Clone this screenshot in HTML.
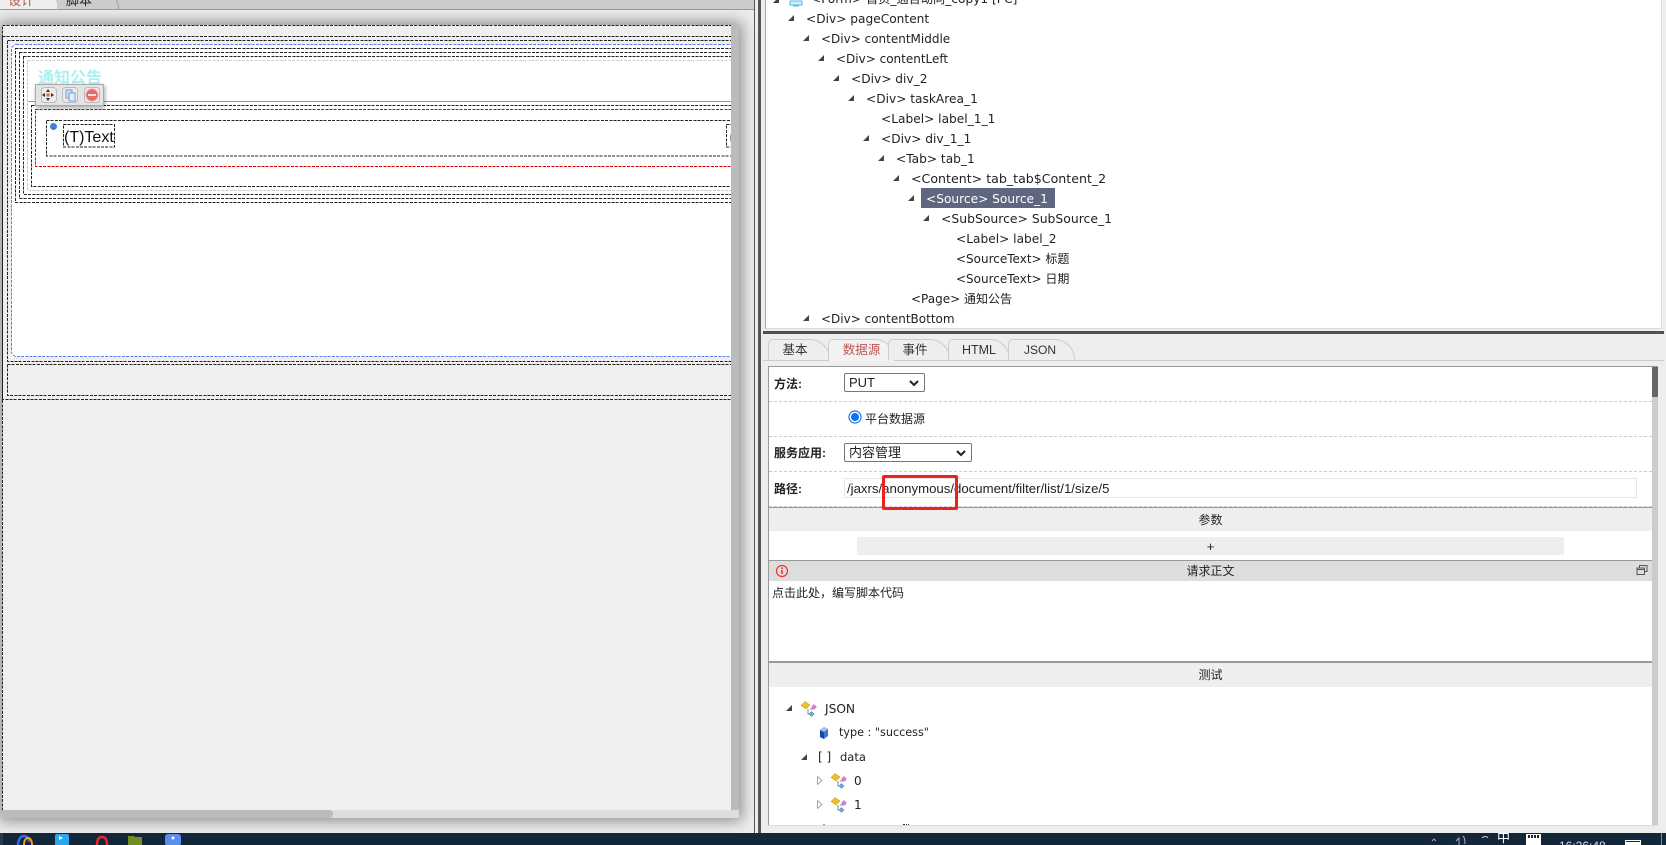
<!DOCTYPE html>
<html><head><meta charset="utf-8"><title>Designer</title>
<style>
html,body{margin:0;padding:0;background:#eee;width:1666px;height:845px;overflow:hidden}
body{position:relative;font-family:"Liberation Sans","WenQuanYi Zen Hei","Noto Sans CJK SC",sans-serif;font-size:12px;color:#222}
div,span{position:absolute;box-sizing:border-box}
.r{white-space:nowrap;height:20px;line-height:20px;font-family:"DejaVu Sans","WenQuanYi Zen Hei","Noto Sans CJK SC",sans-serif;font-size:12.2px;color:#222}
.a{width:0;height:0;border-left:6px solid transparent;border-bottom:6px solid #444}
.h{left:769px;width:883px;text-align:center;font-size:12px;line-height:20px}
.dl{left:769px;width:883px;height:0;border-top:1px dashed #ccc}
.lb{left:774px;font-weight:bold;font-size:12px;line-height:20px;color:#222;white-space:nowrap}
.sel{border:1px solid #777;border-radius:2px;background:#fff;font-size:13px;line-height:17px;padding-left:4px;height:19px;color:#222;white-space:nowrap}
.tab{top:339px;height:21px;background:#eee;border:1px solid #ccc;border-bottom:0;border-radius:5px 20px 0 0;text-align:center;line-height:21px;font-size:12.5px;color:#333}
</style></head><body>

<!-- top tabs of left panel -->
<div style="left:0;top:0;width:754px;height:10px;background:#ccc;border-bottom:1px solid #999;overflow:hidden">
 <div style="left:0;top:-6px;width:58px;height:16px;background:#eee;border-radius:0 14px 0 0;color:#b55;font-size:13px;padding-left:8px;line-height:14px">设计</div>
 <div style="left:57px;top:-6px;width:62px;height:15px;background:#ccc;border-right:1px solid #999;border-radius:0 14px 0 0;color:#222;font-size:13px;padding-left:9px;line-height:14px">脚本</div>
</div>

<!-- canvas -->
<div style="left:0;top:10px;width:754px;height:823px;background:#eee;overflow:hidden">
 <div style="left:2px;top:15px;width:737px;height:793px;background:#efefef;box-shadow:0 0 14px 3px rgba(60,60,60,.55)"></div>
</div>
<div style="left:11px;top:44px;width:720px;height:313px;background:#fff"></div>
<div style="left:28px;top:101px;width:703px;height:1px;background:#999"></div>
<svg width="729" height="786" style="position:absolute;left:2px;top:25px" shape-rendering="crispEdges" fill="none" stroke-width="1" stroke-dasharray="3 1.2">
 <g stroke="#222">
  <rect x="0.5" y="0.5" width="800" height="800"/>
  <rect x="0.5" y="11.5" width="800" height="363"/>
  <rect x="5.5" y="15.5" width="800" height="321"/>
  <rect x="5.5" y="339.5" width="800" height="31"/>
  <rect x="13.5" y="23.5" width="800" height="154"/>
  <rect x="17.5" y="27.5" width="800" height="146"/>
  <rect x="21.5" y="31.5" width="800" height="138"/>
  <rect x="29.5" y="80.5" width="800" height="81"/>
  <rect x="44.5" y="95.5" width="800" height="35.5"/>
  <rect x="61.5" y="99.5" width="51" height="22.5"/>
  <rect x="724.5" y="99.5" width="30" height="22.5"/>
 </g>
 <rect x="9.5" y="19.5" width="800" height="312" stroke="#5b7cf0" rx="5"/>
 <rect x="25.5" y="35.5" width="800" height="130" stroke="#ccc"/>
 <rect x="33.5" y="84.5" width="800" height="57" stroke="#d00"/>
</svg>
<div style="left:38px;top:69px;font-size:16px;line-height:20px;color:#aeeeee;font-weight:bold;white-space:nowrap">通知公告</div>
<div style="left:64px;top:128px;font-size:16px;line-height:20px;color:#111;white-space:nowrap">(T)Text</div>
<div style="left:729px;top:128px;width:2px;overflow:hidden;font-size:16px;line-height:20px;color:#999">(</div>
<div style="left:50px;top:123px;width:7px;height:7px;border-radius:50%;background:#3b83d8"></div>

<!-- toolbar -->
<div style="left:35px;top:84px;width:69px;height:22px;background:#e4e4e4;border:1px solid #aaa;box-shadow:1px 2px 4px rgba(0,0,0,.35)"></div>
<svg width="69" height="22" style="position:absolute;left:35px;top:84px">
 <g fill="#ececec" stroke="#bbb"><rect x="6.5" y="3.5" width="15" height="15" rx="3"/><rect x="27.5" y="3.5" width="15" height="15" rx="3"/><rect x="49.5" y="3.5" width="15" height="15" rx="3"/></g>
 <path d="M13 5l2 3h-4zM13 17l2-3h-4zM7 11l3-2v4zM19 11l-3-2v4z" fill="#333"/><circle cx="13" cy="11" r="1.8" fill="#f07020"/>
 <rect x="31" y="6" width="6" height="8" fill="#cfe0f5" stroke="#7a9cc8"/><rect x="34" y="9" width="6" height="8" fill="#e4eefa" stroke="#7a9cc8"/>
 <circle cx="57" cy="11" r="6" fill="#ec6a60" stroke="#e8a8a0"/><rect x="53" y="10" width="8" height="2" fill="#fde"/>
</svg>

<!-- canvas scrollbars -->
<div style="left:731px;top:25px;width:8px;height:785px;background:#bbb"></div>
<div style="left:2px;top:810px;width:737px;height:8px;background:#ddd"></div>
<div style="left:2px;top:810px;width:331px;height:8px;background:#bbb;border-radius:0 4px 4px 0"></div>

<!-- splitters -->
<div style="left:754px;top:0;width:1px;height:833px;background:#555"></div>
<div style="left:755px;top:0;width:3px;height:833px;background:#eee"></div>
<div style="left:758px;top:0;width:3px;height:833px;background:#555"></div>

<!-- tree panel -->
<div style="left:765px;top:0;width:897px;height:329px;background:#fff;border-left:1px solid #aaa;border-right:1px solid #ddd;border-bottom:1px solid #ddd"></div>
<div style="left:763px;top:331px;width:901px;height:3px;background:#505050"></div>

<div class="a" style="left:773px;top:-3px"></div>
<svg width="16" height="8" style="position:absolute;left:788px;top:0"><path d="M2 1h12v4H2zM5 6h6" fill="#cdeefc" stroke="#5ab8ea"/></svg>
<div class="r" style="left:811px;top:-11px">&lt;Form&gt; 首页_通告动向_copy1 [PC]</div>

<div class="a" style="left:788px;top:15px"></div><div class="r" style="left:806px;top:9px">&lt;Div&gt; pageContent</div>
<div class="a" style="left:803px;top:35px"></div><div class="r" style="left:821px;top:29px;font-size:12px">&lt;Div&gt; contentMiddle</div>
<div class="a" style="left:818px;top:55px"></div><div class="r" style="left:836px;top:49px;font-size:12px">&lt;Div&gt; contentLeft</div>
<div class="a" style="left:833px;top:75px"></div><div class="r" style="left:851px;top:69px">&lt;Div&gt; div_2</div>
<div class="a" style="left:848px;top:95px"></div><div class="r" style="left:866px;top:89px">&lt;Div&gt; taskArea_1</div>
<div class="r" style="left:881px;top:109px">&lt;Label&gt; label_1_1</div>
<div class="a" style="left:863px;top:135px"></div><div class="r" style="left:881px;top:129px">&lt;Div&gt; div_1_1</div>
<div class="a" style="left:878px;top:155px"></div><div class="r" style="left:896px;top:149px">&lt;Tab&gt; tab_1</div>
<div class="a" style="left:893px;top:175px"></div><div class="r" style="left:911px;top:169px;font-size:12.6px">&lt;Content&gt; tab_tab$Content_2</div>
<div class="a" style="left:908px;top:195px"></div>
<div style="left:921px;top:188px;width:134px;height:20px;background:#5f6680"></div>
<div class="r" style="left:926px;top:189px;color:#fff">&lt;Source&gt; Source_1</div>
<div class="a" style="left:923px;top:215px"></div><div class="r" style="left:941px;top:209px;font-size:12.4px">&lt;SubSource&gt; SubSource_1</div>
<div class="r" style="left:956px;top:229px">&lt;Label&gt; label_2</div>
<div class="r" style="left:956px;top:249px;font-size:12px">&lt;SourceText&gt; 标题</div>
<div class="r" style="left:956px;top:269px;font-size:12px">&lt;SourceText&gt; 日期</div>
<div class="r" style="left:911px;top:289px;font-size:12px">&lt;Page&gt; 通知公告</div>
<div class="a" style="left:803px;top:315px"></div><div class="r" style="left:821px;top:309px;font-size:12px">&lt;Div&gt; contentBottom</div>

<!-- property tabs -->
<div style="left:763px;top:360px;width:901px;height:1px;background:#ccc"></div>
<div class="tab" style="left:768px;width:62px;padding-right:8px">基本</div>
<div class="tab" style="left:828px;width:67px;color:#b55;height:22px;background:#f2f2f2">数据源</div>
<div class="tab" style="left:888px;width:62px;padding-right:8px">事件</div>
<div class="tab" style="left:948px;width:62px">HTML</div>
<div class="tab" style="left:1008px;width:67px;padding-right:3px;font-size:12px">JSON</div>

<!-- property content -->
<div style="left:768px;top:366px;width:890px;height:460px;background:#fff;border:1px solid #999;border-width:1px 0 0 1px;border-top:1px solid #999"></div>
<div style="left:768px;top:825px;width:890px;height:1px;background:#ddd"></div>
<div style="left:1652px;top:367px;width:6px;height:458px;background:#ccc"></div>
<div style="left:1652px;top:367px;width:6px;height:30px;background:#666"></div>

<div class="lb" style="top:374px">方法:</div>
<div class="sel" style="left:844px;top:373px;width:81px">PUT
 <svg width="10" height="7" style="position:absolute;right:5px;top:6px"><path d="M1 1l4 4 4-4" fill="none" stroke="#222" stroke-width="2"/></svg></div>
<div class="dl" style="top:401px"></div>
<svg width="14" height="14" style="position:absolute;left:848px;top:410px"><circle cx="7" cy="7" r="6" fill="#fff" stroke="#1a73e8" stroke-width="1.2"/><circle cx="7" cy="7" r="4" fill="#0a72f0"/></svg>
<div style="left:865px;top:409px;font-size:12px;line-height:20px;color:#222;white-space:nowrap">平台数据源</div>
<div class="dl" style="top:436px"></div>
<div class="lb" style="top:443px">服务应用:</div>
<div class="sel" style="left:844px;top:443px;width:128px">内容管理
 <svg width="10" height="7" style="position:absolute;right:5px;top:6px"><path d="M1 1l4 4 4-4" fill="none" stroke="#222" stroke-width="2"/></svg></div>
<div class="dl" style="top:471px"></div>
<div class="lb" style="top:479px">路径:</div>
<div style="left:844px;top:478px;width:793px;height:20px;border:1px solid #e6e6e6;background:#fff;font-size:13.2px;line-height:20px;padding-left:2px;color:#222;white-space:nowrap">/jaxrs/anonymous/document/filter/list/1/size/5</div>
<div class="dl" style="top:506px"></div>
<div style="left:769px;top:507px;width:883px;height:1px;background:#999"></div>

<div style="left:769px;top:508px;width:883px;height:23px;background:#eee"></div>
<div class="h" style="top:510px">参数</div>
<div style="left:857px;top:537px;width:707px;height:18px;background:#eee"></div>
<div class="h" style="top:537px;font-size:13px">+</div>

<div style="left:769px;top:560px;width:883px;height:1px;background:#999"></div>
<div style="left:769px;top:561px;width:883px;height:20px;background:#ddd"></div>
<div class="h" style="top:561px">请求正文</div>
<svg width="14" height="14" style="position:absolute;left:775px;top:564px"><circle cx="7" cy="7" r="5.5" fill="none" stroke="#e33" stroke-width="1.2"/><path d="M7 6v4" stroke="#e33" stroke-width="1.6"/><rect x="6.2" y="3.4" width="1.6" height="1.6" fill="#e33"/></svg>
<svg width="12" height="12" style="position:absolute;left:1636px;top:565px"><path d="M3.5 2.5V.5h7.5v6H9" fill="none" stroke="#555"/><rect x="1" y="3" width="7.5" height="6.5" fill="#ddd" stroke="#555"/><path d="M1 4.5h7.5" stroke="#555"/></svg>
<div style="left:772px;top:583px;font-size:12px;line-height:20px;color:#222;white-space:nowrap">点击此处，编写脚本代码</div>

<div style="left:769px;top:661px;width:883px;height:2px;background:#999"></div>
<div style="left:769px;top:663px;width:883px;height:24px;background:#eee"></div>
<div class="h" style="top:665px">测试</div>

<!-- red annotation box -->
<div style="left:882px;top:475px;width:76px;height:35px;border:3px solid #f0201a;border-radius:2px"></div>

<svg width="0" height="0" style="position:absolute"><defs>
 <g id="j">
  <path d="M0 4.5L4 0.5l5 3.5-4 4z" fill="#f0c030" stroke="#b08a10" stroke-width=".5"/>
  <path d="M10.5 6l2.5-2.5L15.500 6 13 8.500z" fill="#ec80e0" stroke="#a040a0" stroke-width=".5"/>
  <path d="M8 13l2.500-2.500L13 13l-2.500 2.500z" fill="#6aa8ec" stroke="#2860b0" stroke-width=".5"/>
  <path d="M7 8v5h2M9 8h3" fill="none" stroke="#789"/>
 </g></defs></svg>

<div class="a" style="left:786px;top:705px"></div>
<svg width="16" height="16" style="position:absolute;left:801px;top:701px"><use href="#j"/></svg>
<div class="r" style="left:825px;top:699px">JSON</div>
<svg width="10" height="12" style="position:absolute;left:819px;top:727px"><path d="M1 3l4-3 4 2v7l-4 3-4-2z" fill="#3c78d8"/><path d="M1 3l4 2v7l-4-2z" fill="#1a4aa0"/><path d="M1 3l4-3 4 2-4 3z" fill="#9cc4f4"/></svg>
<div class="r" style="left:839px;top:723px;font-size:11.2px">type : "success"</div>
<div class="a" style="left:801px;top:754px"></div>
<div class="r" style="left:818px;top:747px;font-size:12px">[ ]</div>
<div class="r" style="left:840px;top:747px;font-size:11.5px">data</div>
<svg width="6" height="9" style="position:absolute;left:817px;top:776px"><path d="M.5.5l4.500 4-4.500 4z" fill="#fff" stroke="#aaa"/></svg>
<svg width="16" height="16" style="position:absolute;left:831px;top:773px"><use href="#j"/></svg>
<div class="r" style="left:854px;top:771px;font-size:12px">0</div>
<svg width="6" height="9" style="position:absolute;left:817px;top:800px"><path d="M.5.5l4.500 4-4.500 4z" fill="#fff" stroke="#aaa"/></svg>
<svg width="16" height="16" style="position:absolute;left:831px;top:797px"><use href="#j"/></svg>
<div class="r" style="left:854px;top:795px;font-size:12px">1</div>
<div style="left:903px;top:824px;width:6px;height:1px;border-top:1px dotted #333"></div>
<div style="left:823px;top:824px;width:2px;height:1px;background:#6aa8ec"></div>

<!-- taskbar -->
<div style="left:0;top:833px;width:1666px;height:12px;background:#14273a;overflow:hidden">
 <div style="left:0;top:0;width:3px;height:12px;background:#2a3a4a"></div>
 <svg width="200" height="12" style="position:absolute;left:0;top:0">
  <path d="M18 12c0-6 3-9 6-9s5 2 5 6" fill="none" stroke="#2f6fe0" stroke-width="2.4"/>
  <path d="M24 12c0-5 2-7 4-7s4 2 4 7" fill="none" stroke="#f0a020" stroke-width="2"/>
  <rect x="55" y="1" width="14" height="12" rx="2" fill="#29a8f0"/><path d="M59 3l4 2-4 2z" fill="#fff"/>
  <path d="M97 12c0-6 2-8 5-8s5 2 5 8" fill="none" stroke="#e8282c" stroke-width="2.5"/>
  <path d="M128 3h6l1 1h7v8h-14z" fill="#6f8f20"/>
  <rect x="165" y="1" width="16" height="12" rx="3" fill="#5b8cf0"/><circle cx="173" cy="5" r="1.5" fill="#fff"/>
 </svg>
 <svg width="240" height="12" style="position:absolute;left:1426px;top:0">
  <path d="M6 8l2-2 2 2M30 8l3-3v7M37 3c2 2 2 5 2 8" fill="none" stroke="#aab" stroke-width="1"/>
  <path d="M56 5c2-2 5-2 6 0" fill="none" stroke="#ccd" stroke-width="1"/>
 </svg>
 <div style="left:1497px;top:-3px;color:#fff;font-size:13px;line-height:16px">中</div>
 <div style="left:1526px;top:1px;width:15px;height:11px;background:#fff"><div style="left:2px;top:1px;width:11px;height:3px;background:repeating-linear-gradient(90deg,#14273a 0 2px,#fff 2px 3px)"></div></div>
 <div style="left:1559px;top:6px;color:#dde;font-size:12px;line-height:14px;white-space:nowrap">16:26:48</div>
 <div style="left:1625px;top:7px;width:16px;height:5px;background:#fff"><div style="left:1px;top:1px;width:14px;height:1px;background:#14273a"></div></div>
 <div style="left:1661px;top:0;width:1px;height:12px;background:#889"></div>
</div>
</body></html>
